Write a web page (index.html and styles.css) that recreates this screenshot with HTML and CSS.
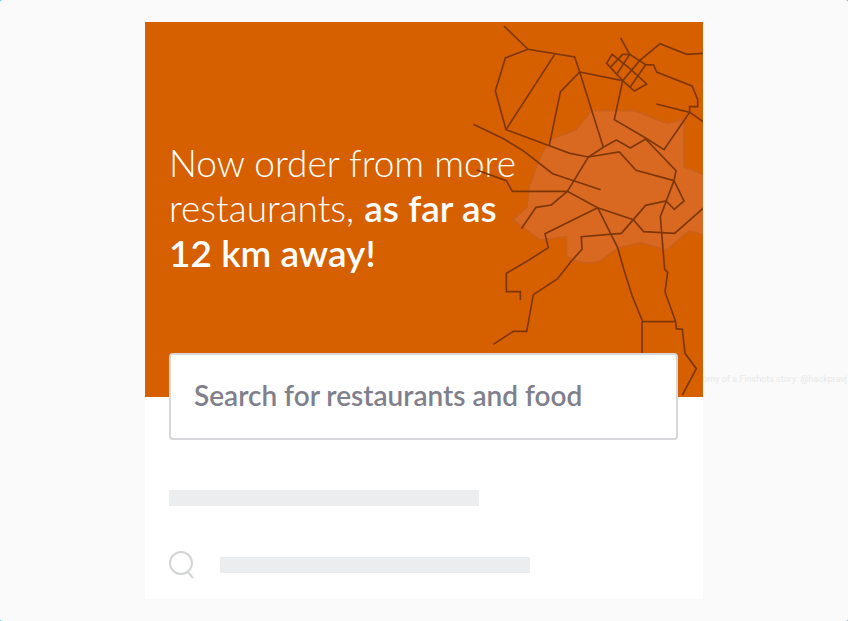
FILE: index.html
```html
<!DOCTYPE html>
<html lang="en">
<head>
<meta charset="utf-8">
<meta name="viewport" content="width=device-width, initial-scale=1">
<title>Order from more restaurants</title>
<link rel="stylesheet" href="styles.css">
</head>
<body>
<div class="page">
  <p class="credit">tomy of a Finshots story: @hackpravj</p>
  <main class="card">
    <section class="hero">
      <h1 class="headline">Now order from more restaurants, <strong>as far as</strong> <strong>12&nbsp;km away!</strong></h1>
      <svg class="map" viewBox="0 6 717 1125" aria-hidden="true">
        <path class="zone" d="M262 356L335 330L383 272H510L608 310L660 298V440L722 464V646L675 633L608 690L530 668L460 685L410 722Q380 734 345 725L308 710V650L228 660L147 600L190 560Q192 500 203 480Q215 440 240 390Z"/>
        <g class="roads">
          <path d="M120 18L192 88L332 111L347 156L418 382"/>
          <path d="M192 88L124 114L94 213L126 329L256 377L318 400L373 411L466 396L516 451L630 482"/>
          <path d="M272 103L126 329M347 156L289 216L256 376"/>
          <path d="M347 156L476 182L451 299L545 354L600 389L677 277"/>
          <path d="M28 313L120 357L180 394L266 461L410 509"/>
          <path d="M38 450L127 482L145 514H310L401 563L508 599L539 635L632 640L722 561"/>
          <path d="M172 626L216 562L262 555L310 514L373 411L418 382L457 360L499 384L545 357L636 452L630 482L589 590L602 748L611 757L603 815L635 905L637 926L655 928L663 1000L697 1046L655 1125"/>
          <path d="M630 482L660 543L631 568L606 543L545 556L508 599L472 640L352 650L354 688L325 720L280 777L208 824L188 934H148L88 973"/>
          <path d="M401 563L243 641L253 683L195 720L127 760V815H169V840"/>
          <path d="M401 563L461 683L480 750L504 826L536 905H635M534 905V1010"/>
          <path d="M470 54L497 103M476 182L527 122L588 71L668 103L722 100"/>
          <path d="M444 103L428 130L476 182L511 213L548 192L497 145Z"/>
          <path d="M441 140L476 103H497L545 134L569 135L578 156L684 198L701 238V260H677V277L722 308M577 252L677 277"/>
          <path d="M460 160L497 103M499 200L545 134"/>
        </g>
      </svg>
    </section>
    <form class="search">
      <input class="search-input" type="search" aria-label="Search for restaurants and food" placeholder="Search for restaurants and food">
    </form>
    <section class="results">
      <div class="bar"></div>
      <div class="result">
        <svg class="icon" viewBox="0 0 25 28" aria-hidden="true"><circle cx="12" cy="12" r="11"/><path d="M18 20L24 27"/></svg>
        <div class="bar"></div>
      </div>
    </section>
  </main>
</div>
</body>
</html>
```
FILE: styles.css
```css
* { box-sizing: border-box; }

body {
  margin: 0;
  background: #1badf8;
}

.page {
  position: relative;
  min-height: 100vh;
  padding: 22px 145px;
  border-radius: 2px;
  background: #fafafa;
}

.credit {
  position: absolute;
  top: 373px;
  right: 1px;
  margin: 0;
  color: #e9e9e9;
  font: 9px/12px Roboto, sans-serif;
}

.card {
  position: relative;
  max-width: 558px;
  margin: 0 auto;
  padding-bottom: 20px;
  background: #fff;
}

.hero {
  position: relative;
  min-height: 375px;
  padding: 118px 24px 0 24px;
  overflow: hidden;
  background: #d65f00;
}

.headline {
  max-width: 360px;
  margin: 0;
  color: #fff;
  font: 300 37px/45px Lato, sans-serif;
}

.headline strong { font-weight: 600; }

.map {
  position: absolute;
  top: 0;
  right: 0;
  width: 239px;
  height: 375px;
}

.zone {
  fill: #d96920;
  stroke: #cb6118;
  stroke-width: 5;
}

.roads {
  fill: none;
  stroke: #7f3606;
  stroke-width: 5;
}

.search {
  position: relative;
  margin: -44px 25px 0 24px;
}

.search-input {
  display: block;
  width: 100%;
  height: 87px;
  padding: 0 23px 3px;
  border: 2px solid #d6d7db;
  border-radius: 4px;
  background: #fff;
  color: #7f808c;
  font: 600 28px/36px Lato, sans-serif;
  appearance: none;
}

.search-input::placeholder {
  color: #7f808c;
  opacity: 1;
}

.results {
  display: grid;
  gap: 45px;
  padding: 50px 24px 0;
}

.bar {
  width: 310px;
  height: 16px;
  background: #ebedee;
}

.result {
  display: flex;
  align-items: center;
  gap: 26px;
}

.icon {
  width: 25px;
  height: 28px;
  fill: none;
  stroke: #d3d4d5;
  stroke-width: 2;
}
```
